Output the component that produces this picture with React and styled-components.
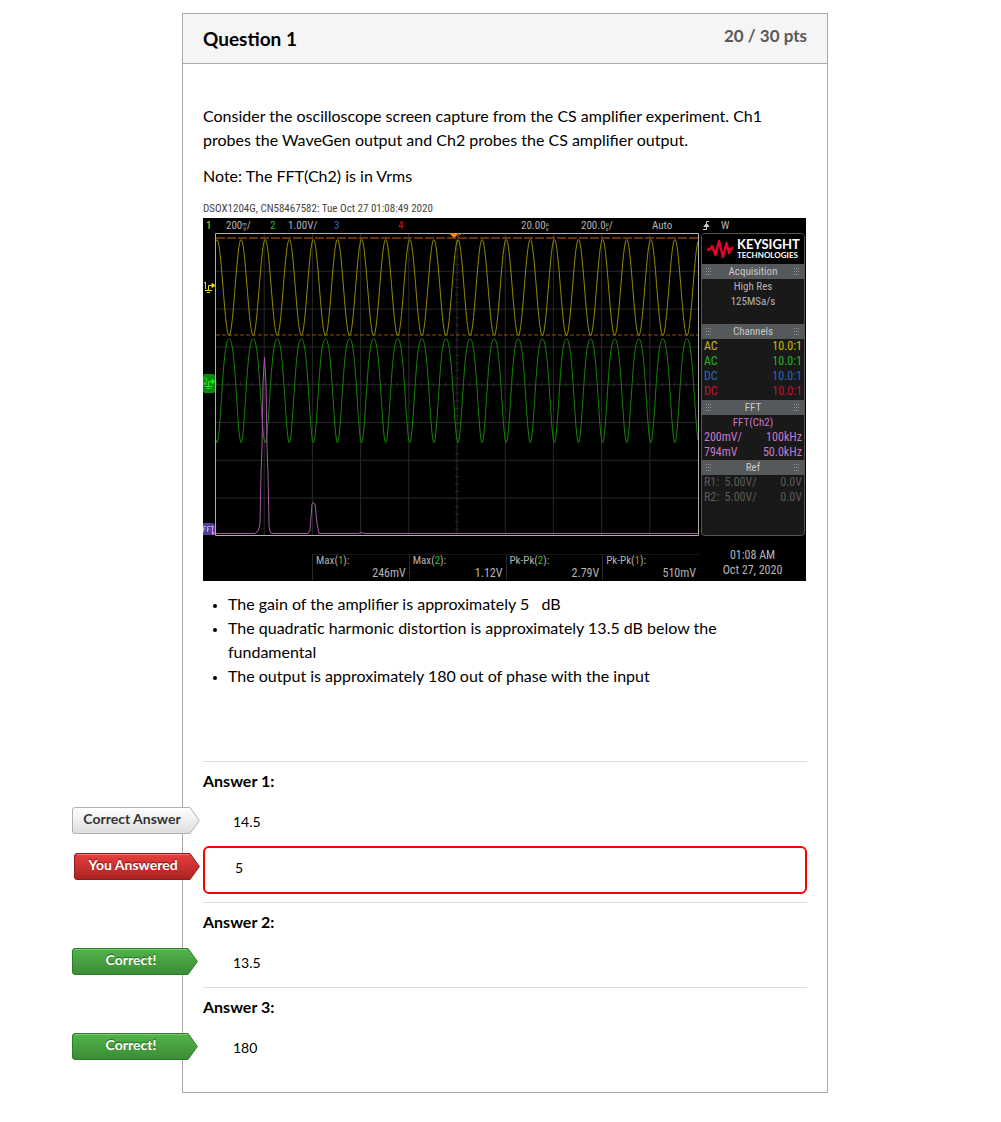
import React from 'react';
import styled, { createGlobalStyle, css } from 'styled-components';

const GlobalStyle = createGlobalStyle`
    * { box-sizing: border-box; }

    body {
        margin: 0;
        background: #fff;
        color: #000;
        font-family: Lato, sans-serif;
        font-size: 16px;
        line-height: 24px;
    }
`;

const Page = styled.main`
    padding: 13px 173px 24px 182px;
`;

const Card = styled.section`
    border: 1px solid #aaa;
`;

const CardHeader = styled.header`
    display: flex;
    justify-content: space-between;
    align-items: flex-start;
    height: 50px;
    padding: 10px 20px;
    background: #f5f5f5;
    border-bottom: 1px solid #aaa;
`;

const Title = styled.h2`
    margin: 3px 0 0;
    font-size: 19px;
    line-height: 24px;
    font-weight: 700;
`;

const Points = styled.div`
    font-size: 17px;
    font-weight: 700;
    color: #595959;
`;

const CardBody = styled.div`
    padding: 40px 20px 20px;
`;

const Text = styled.p`
    margin: 0 0 12px;
`;

const List = styled.ul`
    margin: 11px 0 73px;
    padding-left: 25px;

    li::marker { font-size: 12px; }
`;

const Figure = styled.figure`
    margin: 0;
    max-width: 603px;
    font-family: "Liberation Sans Narrow", "Roboto Condensed", Roboto, sans-serif;
    font-size: 11px;
    line-height: 15px;
`;

const Caption = styled.figcaption`
    height: 18px;
    color: #444;
    line-height: 18px;
    white-space: nowrap;
`;

const Screen = styled.div`
    background: #000;
    color: #b4b4b4;
    display: grid;
    grid-template-columns: 12px minmax(0, 1fr) 107px;
    grid-template-rows: 15px 303px 45px;
`;

const StatusBar = styled.div`
    grid-column: 1 / -1;
    display: grid;
    grid-template-columns: 20px 44px 18px 46px 64px 123px 60px 71px 51px 18px 1fr;
    padding-left: 3px;
`;

// the scope stacks the two letters of a unit in one character cell
const Unit = styled.span`
    display: inline-flex;
    flex-direction: column;
    align-items: center;
    vertical-align: middle;
    font-size: 6px;
    line-height: 5px;
`;

const Tinted = styled.span`
    color: ${p => p.color};
`;

const Gutter = styled.svg`
    display: block;
    width: 12px;
    height: 303px;
`;

const Plot = styled.svg`
    display: block;
    width: 100%;
    height: 303px;
`;

const Side = styled.div`
    margin: 0 1px 0 2px;
    border: 1px solid #555;
    border-radius: 4px;
    background: #191919;
    overflow: hidden;
`;

const Brand = styled.div`
    display: flex;
    align-items: center;
    gap: 4px;
    height: 30px;
    padding-left: 5px;
    background: #000;
    color: #fff;
    font-family: Lato, sans-serif;
    font-weight: 700;
`;

const BrandName = styled.div`
    font-size: 13px;
    line-height: 13px;
`;

const BrandLine = styled.div`
    font-size: 8px;
    line-height: 9px;
`;

const SideTitle = styled.div`
    display: flex;
    justify-content: space-between;
    align-items: center;
    height: 15px;
    padding: 0 4px;
    background: #55595c;
    color: #c8c8c8;
`;

const SideRows = styled.div`
    min-height: ${p => p.$height}px;
    padding: 0 2px;
`;

const SideRow = styled.div`
    display: flex;
    justify-content: ${p => (p.$center ? 'center' : 'space-between')};
    color: ${p => p.$color};
    font-size: ${p => (p.$center ? 11 : 12)}px;
    white-space: pre;
`;

const Measures = styled.div`
    grid-column: 1 / 3;
    display: grid;
    grid-template-columns: 109px repeat(4, minmax(0, 1fr));
    margin-top: 18px;
    height: 26px;
`;

const Measure = styled.div`
    border-left: 1px solid #2a2a2a;
    border-top: 1px solid #161616;
    padding: 0 3px;
    line-height: 12px;

    div:last-child {
        font-size: 12px;
        text-align: right;
    }
`;

const Clock = styled.div`
    padding-top: 12px;
    font-size: 12px;
    text-align: center;
`;

const Answer = styled.section`
    border-top: 1px solid #ddd;
`;

const AnswerTitle = styled.h3`
    margin: 7px 0 5px;
    font-size: 16px;
    line-height: 24px;
    font-weight: 700;
`;

const Row = styled.div`
    position: relative;
    height: 48px;
    padding: 12px 30px;
    font-size: 14px;

    ${p => p.$wrong && css`
        margin-bottom: 8px;
        border: 2px solid #f00;
        border-radius: 6px;
        padding: 8px 30px;
    `}
`;

// the arrow hangs over the left edge of the card
const Flag = styled.div`
    position: absolute;
    top: ${p => p.$top}px;
    right: 100%;
    margin-right: ${p => p.$gap}px;
    width: ${p => p.$width}px;
    height: 27px;

    svg { display: block; }

    span {
        position: absolute;
        inset: 0 8px 0 0;
        text-align: center;
        font-size: 14px;
        line-height: 24px;
        font-weight: 700;
        color: ${p => p.$color};
        text-shadow: ${p => p.$shadow};
    }
`;

const tones = {
    plain: { from: '#fff', to: '#dedede', edge: '#b0b0b0', light: '#fff', color: '#333', shadow: 'none', width: 128, gap: 3 },
    wrong: { from: '#e9403f', to: '#a92222', edge: '#8c1d1d', light: '#f07070', color: '#fff', shadow: '0 -1px 1px #801010', width: 126, gap: 5 },
    right: { from: '#50b548', to: '#3d8b37', edge: '#2f7a2a', light: '#7ccc75', color: '#fff', shadow: '0 -1px 1px #25601f', width: 126, gap: 5 },
};

const AnswerFlag = ({ tone, top, children }) => {
    const t = tones[tone];
    const w = t.width;
    return (
        <Flag $top={top} $gap={t.gap} $width={w} $color={t.color} $shadow={t.shadow}>
            <svg width={w} height="27" viewBox={`0 0 ${w} 27`} aria-hidden="true">
                <defs>
                    <linearGradient id={`tone-${tone}`} x1="0" y1="0" x2="0" y2="1">
                        <stop offset="0" stopColor={t.from} />
                        <stop offset="1" stopColor={t.to} />
                    </linearGradient>
                </defs>
                <path
                    d={`M3 .5H${w - 10}L${w - 0.6} 13.5L${w - 10} 26.5H3Q.5 26.5 .5 24V3Q.5 .5 3 .5Z`}
                    fill={`url(#tone-${tone})`}
                    stroke={t.edge}
                />
                <path d={`M3 1.5H${w - 11}`} stroke={t.light} />
            </svg>
            <span>{children}</span>
        </Flag>
    );
};

const Grip = () => (
    <svg width="6" height="8" viewBox="0 0 6 8" fill="#8d9194" aria-hidden="true">
        {[0, 3, 6].map(y => [0, 2, 4].map(x => <rect key={`${x}${y}`} x={x} y={y} width="1" height="1" />))}
    </svg>
);

const PERIOD = 24.1;

const trace = (fn, from, to) => {
    const points = [];
    for (let x = from; x <= to; x += 0.5) {
        points.push(`${x},${fn(((x - 2) / PERIOD) * Math.PI * 2).toFixed(2)}`);
    }
    return points.join(' ');
};

const inputWave = a => 54.5 - 48 * Math.cos(a);
const outputWave = a => 150 + 52 * (Math.cos(a) + 0.15 * Math.cos(2 * a));

const columns = [1, 2, 3, 4, 5, 6, 7, 8, 9].map(n => n * 48.2 + 1);
const rows = [1, 2, 3, 4, 5, 6, 7].map(n => n * 37.8 + 0.5);

const ScopePlot = () => (
    <Plot viewBox="0 0 484 303" preserveAspectRatio="none" role="img" aria-label="Oscilloscope traces">
        <g stroke="#292929">
            {columns.map(x => <path key={x} d={`M${x} 1V302`} />)}
            {rows.map(y => <path key={y} d={`M1 ${y}H483`} />)}
        </g>
        <path d="M1 151.5H483" stroke="#292929" strokeWidth="4" strokeDasharray="1 11.05" />
        <path d="M242 1V302" stroke="#292929" strokeWidth="4" strokeDasharray="1 6.56" />
        <path d="M1 5H483" stroke="#c86408" strokeDasharray="9 2" />
        <path d="M1 102H483" stroke="#96500a" strokeDasharray="4 2" />
        <polyline points={trace(inputWave, 1, 483)} fill="none" stroke="#928c00" />
        <polyline points={trace(outputWave, 1, 483)} fill="none" stroke="#168505" />
        <path
            d="M1 300.5H40Q44 299 45 290L46 240L47 214L48 150L49.500 124L51 150L52 214L53 240L54 290Q54 300.500 57 300.500H93L95 297L97 271Q98 268 100 271L102 290L104 300.500H143L146 299.500L150 300.500H483"
            fill="none"
            stroke="#a55ca5"
        />
        <path d="M.5 302.500V.5H483.500V302.500Z" fill="none" stroke="#b0b0b0" />
        <path d="M234 0H244L239 5Z" fill="#ff8a10" />
        <path d="M242 4L247 0" stroke="#c86408" />
    </Plot>
);

const ScopeGutter = () => (
    <Gutter viewBox="0 0 12 303" aria-hidden="true">
        <g fill="none" stroke="#e6dc00">
            <path d="M1 50L2.500 49V56M5.500 57V52.500H10M2 57.500H9M4 59.500H7" />
            <path d="M9 50.500L12 52.500L9 54.500Z" fill="#e6dc00" />
        </g>
        <rect x="0" y="141" width="12" height="19" rx="2" fill="#0a8a0a" />
        <g fill="none" stroke="#25e525">
            <path d="M.5 146Q3 143 4 146Q4 148 .5 151H4M5.500 153V148.500H10M2 153.500H9M4 155.500H7" />
            <path d="M9 146.500L12 148.500L9 150.500Z" fill="#25e525" />
        </g>
        <path d="M0 290H10L12 292V302H0Z" fill="#50409a" />
        <path d="M.5 299V293.500H3M.5 296H2.500M4.500 299V293.500H7M4.500 296H6.500M7.500 293.500H11M9.500 293.500V299" fill="none" stroke="#c9a0dd" />
        <path d="M9 298L12 300.500L9 302Z" fill="#e68be6" />
    </Gutter>
);

const sections = [
    { title: 'Acquisition', height: 45, rows: [['#b4b4b4', 'High Res'], ['#b4b4b4', '125MSa/s']] },
    {
        title: 'Channels',
        height: 61,
        rows: [
            ['#c8be00', 'AC', '10.0:1'],
            ['#1eb91e', 'AC', '10.0:1'],
            ['#2864c8', 'DC', '10.0:1'],
            ['#c80f32', 'DC', '10.0:1'],
        ],
    },
    {
        title: 'FFT',
        height: 45,
        rows: [['#c878c8', 'FFT(Ch2)'], ['#c878c8', '200mV/', '100kHz'], ['#c878c8', '794mV', '50.0kHz']],
    },
    { title: 'Ref', height: 60, rows: [['#5a5a5a', 'R1:  5.00V/', '0.0V'], ['#5a5a5a', 'R2:  5.00V/', '0.0V']] },
];

const measures = [
    { name: 'Max', channel: '1', value: '246mV' },
    { name: 'Max', channel: '2', value: '1.12V' },
    { name: 'Pk-Pk', channel: '2', value: '2.79V' },
    { name: 'Pk-Pk', channel: '1', value: '510mV' },
];

const Scope = () => (
    <Figure>
        <Caption>DSOX1204G, CN58467582: Tue Oct 27 01:08:49 2020</Caption>
        <Screen>
            <StatusBar>
                <Tinted color="#d2c800">1</Tinted>
                <span>200<Unit><span>m</span><span>V</span></Unit>/</span>
                <Tinted color="#1ec81e">2</Tinted>
                <span>1.00V/</span>
                <Tinted color="#2864c8">3</Tinted>
                <Tinted color="#dc0f32">4</Tinted>
                <span>20.00<Unit><span>µ</span><span>s</span></Unit></span>
                <span>200.0<Unit><span>µ</span><span>s</span></Unit>/</span>
                <span>Auto</span>
                <svg width="8" height="15" viewBox="0 0 8 15" fill="none" stroke="#ccc" aria-hidden="true">
                    <path d="M0 11.500H3.500V3.500H6" />
                    <path d="M1 8.500L3.500 5.500L6 8.500Z" fill="#ccc" />
                </svg>
                <span>W</span>
            </StatusBar>
            <ScopeGutter />
            <ScopePlot />
            <Side>
                <Brand>
                    <svg width="26" height="20" viewBox="0 0 26 20" aria-hidden="true">
                        <path
                            d="M0 10.500H3L5 7L8.500 16L12 2L16 18L19.500 4L22 14L23.500 9.500H26"
                            fill="none"
                            stroke="#e90029"
                            strokeWidth="2.4"
                            strokeLinejoin="round"
                        />
                    </svg>
                    <div>
                        <BrandName>KEYSIGHT</BrandName>
                        <BrandLine>TECHNOLOGIES</BrandLine>
                    </div>
                </Brand>
                {sections.map(section => (
                    <React.Fragment key={section.title}>
                        <SideTitle><Grip />{section.title}<Grip /></SideTitle>
                        <SideRows $height={section.height}>
                            {section.rows.map(([color, left, right], i) => (
                                <SideRow key={i} $color={color} $center={!right}>
                                    <span>{left}</span>
                                    {right && <span>{right}</span>}
                                </SideRow>
                            ))}
                        </SideRows>
                    </React.Fragment>
                ))}
            </Side>
            <Measures>
                <span />
                {measures.map(m => (
                    <Measure key={m.value}>
                        <div>
                            {m.name}(<Tinted color={m.channel === '1' ? '#a09600' : '#1ec81e'}>{m.channel}</Tinted>):
                        </div>
                        <div>{m.value}</div>
                    </Measure>
                ))}
            </Measures>
            <Clock>
                <div>01:08 AM</div>
                <div>Oct 27, 2020</div>
            </Clock>
        </Screen>
    </Figure>
);

export default () => {
    return (
        <>
            <GlobalStyle />
            <Page>
                <Card>
                    <CardHeader>
                        <Title>Question 1</Title>
                        <Points>20 / 30 pts</Points>
                    </CardHeader>
                    <CardBody>
                        <Text>
                            Consider the oscilloscope screen capture from the CS amplifier experiment. Ch1
                            probes the WaveGen output and Ch2 probes the CS amplifier output.
                        </Text>
                        <Text>Note: The FFT(Ch2) is in Vrms</Text>
                        <Scope />
                        <List>
                            <li>The gain of the amplifier is approximately 5 &nbsp; dB</li>
                            <li>The quadratic harmonic distortion is approximately 13.5 dB below the fundamental</li>
                            <li>The output is approximately 180 out of phase with the input</li>
                        </List>
                        <Answer>
                            <AnswerTitle>Answer 1:</AnswerTitle>
                            <Row>
                                <AnswerFlag tone="plain" top={9}>Correct Answer</AnswerFlag>
                                14.5
                            </Row>
                            <Row $wrong>
                                <AnswerFlag tone="wrong" top={5}>You Answered</AnswerFlag>
                                5
                            </Row>
                        </Answer>
                        <Answer>
                            <AnswerTitle>Answer 2:</AnswerTitle>
                            <Row>
                                <AnswerFlag tone="right" top={9}>Correct!</AnswerFlag>
                                13.5
                            </Row>
                        </Answer>
                        <Answer>
                            <AnswerTitle>Answer 3:</AnswerTitle>
                            <Row>
                                <AnswerFlag tone="right" top={9}>Correct!</AnswerFlag>
                                180
                            </Row>
                        </Answer>
                    </CardBody>
                </Card>
            </Page>
        </>
    );
};
